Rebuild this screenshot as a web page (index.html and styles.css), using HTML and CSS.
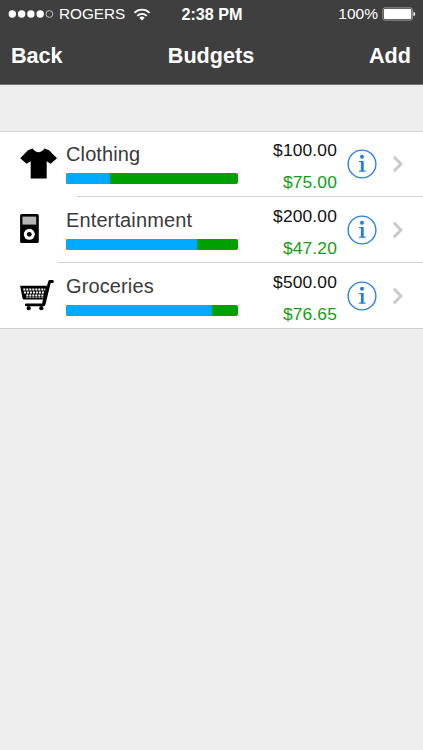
FILE: index.html
```html
<!DOCTYPE html>
<html lang="en">
<head>
<meta charset="utf-8">
<title>Budgets</title>
<link rel="stylesheet" href="styles.css">
</head>
<body>
<svg class="defs" width="0" height="0" aria-hidden="true">
  <symbol id="info" viewBox="0 0 30 30">
    <circle cx="15" cy="15" r="13.9" fill="none" stroke="#2a82e8" stroke-width="1.4"/>
    <circle cx="15" cy="7.8" r="2" fill="#1f7ce8"/>
    <path d="M11.9 11.9h4.8v9.6l2 .3v1h-6.8v-1l2-.3v-8.3l-2-.3z" fill="#1f7ce8"/>
  </symbol>
  <symbol id="chevron" viewBox="0 0 12 18">
    <path d="M1.8 1.7 9 9l-7.2 7.3" fill="none" stroke="#c7c7cc" stroke-width="2.8"/>
  </symbol>
</svg>
<header class="header">
  <div class="status">
    <div class="carrier">
      <svg width="46" height="10" viewBox="0 0 46 10"><g fill="#fff"><circle cx="4.3" cy="5" r="3.7"/><circle cx="13.6" cy="5" r="3.7"/><circle cx="22.9" cy="5" r="3.7"/><circle cx="32.2" cy="5" r="3.7"/></g><circle cx="41.4" cy="5" r="3.4" fill="none" stroke="#ddd" stroke-width=".8"/></svg>
      <span class="network">ROGERS</span>
      <svg class="wifi" width="18" height="13" viewBox="0 0 18 13"><path d="M1.4 4.8a10.8 10.8 0 0 1 15.2 0M4.3 7.8a6.7 6.7 0 0 1 9.4 0" fill="none" stroke="#fff" stroke-width="1.8"/><path d="M6.3 9.7a3.9 3.9 0 0 1 5.4 0L9 12.4z" fill="#fff"/></svg>
    </div>
    <span class="time">2:38 PM</span>
    <div class="battery">
      <span>100%</span>
      <svg width="34" height="14" viewBox="0 0 34 14"><rect x=".9" y=".9" width="29.4" height="12.2" rx="1.8" fill="none" stroke="#aaa" stroke-width=".9"/><rect x="2" y="2" width="27.2" height="10" rx=".8" fill="#fff"/><path d="M31.5 4.8q1.7.4 1.7 2.2t-1.7 2.2z" fill="#fff"/></svg>
    </div>
  </div>
  <nav class="nav"><span>Back</span><h1>Budgets</h1><span class="add">Add</span></nav>
</header>
<main class="list">
  <section class="row clothing">
    <svg class="icon" width="38" height="32" viewBox="0 0 38 32"><path d="M12.5.5Q18.5 8 24.5.5L29 2.3 37 10.3 30.7 15.7 26.7 13.2V30.5H10.7V13.2L6.6 15.7.2 10.3 8 2.3z"/></svg>
    <div class="detail"><div class="name">Clothing</div><div class="bar"><div class="spent" style="width:43.5px"></div></div></div>
    <div class="amounts"><div>$100.00</div><div class="left">$75.00</div></div>
    <svg class="info" width="30" height="30"><use href="#info"/></svg>
    <svg class="chevron" width="12" height="18"><use href="#chevron"/></svg>
  </section>
  <section class="row entertainment">
    <svg class="icon" width="38" height="32" viewBox="0 0 38 32"><rect x=".1" y="0" width="18.7" height="29" rx="1.6"/><path d="M2.4 2.6h13.8v8H2.4z" fill="#b5b5b5"/><circle cx="9.3" cy="20.3" r="5.5" fill="#fff"/><circle cx="9.3" cy="20.3" r="2.4"/></svg>
    <div class="detail"><div class="name">Entertainment</div><div class="bar"><div class="spent" style="width:131px"></div></div></div>
    <div class="amounts"><div>$200.00</div><div class="left">$47.20</div></div>
    <svg class="info" width="30" height="30"><use href="#info"/></svg>
    <svg class="chevron" width="12" height="18"><use href="#chevron"/></svg>
  </section>
  <section class="row">
    <svg class="icon" width="38" height="32" viewBox="0 0 38 32">
      <path d="M.1 5.8H27L28.3 1.2Q28.6.1 29.8.1H32.4Q33.9.1 33.9 1.6T32.4 3.1H30.7L25.5 24.3Q25.1 26.2 23.4 26.2H6.3Q4.9 26.2 4.9 24.8T6.3 23.4H22.2L23 19.4H3.8Q2.8 19.4 2.6 18.4z"/>
      <circle cx="8.7" cy="28.2" r="2.1"/><circle cx="21.3" cy="28.2" r="2.1"/>
      <g fill="none" stroke="#fff" stroke-width="2" stroke-dasharray="2 1"><path d="M3.3 9.5h22"/><path d="M3.9 12.5h21"/><path d="M6.3 15.5h17.5"/></g>
      <path d="M6.3 17.6h17" fill="none" stroke="#ddd" stroke-width=".8" stroke-dasharray="2 1"/>
    </svg>
    <div class="detail"><div class="name">Groceries</div><div class="bar"><div class="spent" style="width:145.5px"></div></div></div>
    <div class="amounts"><div>$500.00</div><div class="left">$76.65</div></div>
    <svg class="info" width="30" height="30"><use href="#info"/></svg>
    <svg class="chevron" width="12" height="18"><use href="#chevron"/></svg>
  </section>
</main>
</body>
</html>
```
FILE: styles.css
```css
* { box-sizing: border-box; }
body { margin: 0; min-height: 750px; background: #eee; font-family: "Liberation Sans", Arial, sans-serif; }
svg { display: block; flex: none; }
.defs { position: absolute; }
.header { height: 85px; background: #3f3f3f; color: #fff; border-bottom: 1px solid #777475; }
.status { display: grid; grid-template-columns: 1fr auto 1fr; height: 28px; align-items: center; padding: 0 7px 0 8px; font-size: 15.5px; line-height: 20px; }
.carrier { display: flex; align-items: center; }
.network { margin-left: 5px; width: 67px; font-size: 15.3px; }
.wifi { margin-left: 7px; }
.time { font-weight: bold; font-size: 16.2px; }
.battery { display: flex; align-items: center; justify-content: flex-end; gap: 4px; }
.nav { display: grid; grid-template-columns: 1fr auto 1fr; height: 56px; align-items: center; padding: 0 12px 0 11px; font-size: 21.6px; font-weight: bold; }
.nav h1 { margin: 0; font-size: inherit; }
.add { text-align: right; }
.list { margin-top: 46px; background: #fff; border-top: 1px solid #d2d2d2; border-bottom: 1px solid #cecece; }
.row { display: flex; height: 66px; padding-left: 20px; background: linear-gradient(#d3d3d3, #d3d3d3) no-repeat 100% 64px / 0 1px; }
.clothing { background-size: 346px 1px; }
.entertainment { background-size: 365px 1px; }
.row:last-child { height: 64px; }
.icon { margin-top: 16px; }
.detail { width: 172px; margin-left: 8px; padding-top: 10px; }
.name { font-size: 20px; line-height: 24px; letter-spacing: .12px; color: #3a3a3a; }
.bar { height: 11px; margin-top: 7px; border-radius: 2px; overflow: hidden; background: #00a000; }
.spent { height: 100%; background: #00aaff; }
.amounts { width: 99px; padding-top: 8px; text-align: right; font-size: 17.4px; line-height: 20px; letter-spacing: .15px; color: #111; }
.left { margin-top: 12px; color: #12a012; }
.info { margin: 17px 0 0 10px; }
.chevron { margin: 23px 0 0 15px; }
```
